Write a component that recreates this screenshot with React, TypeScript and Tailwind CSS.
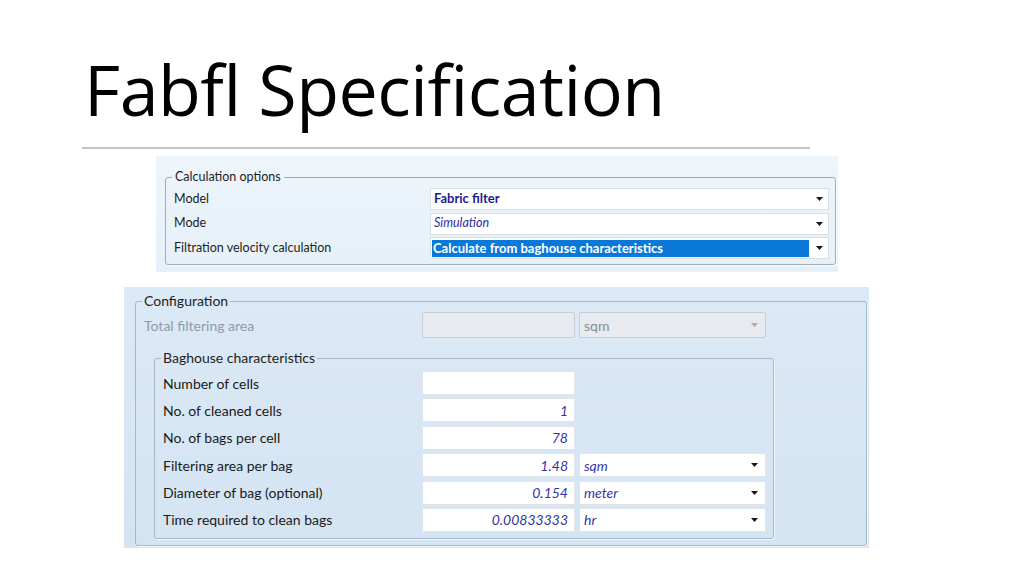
import React from 'react';

const Arrow: React.FC<{ grey?: boolean }> = ({ grey }) => (
  <svg width="7" height="4" viewBox="0 0 7 4" className={grey ? 'fill-[#a9adb2]' : 'fill-[#1a1a1a]'}>
    <path d="M0 0h7L3.5 4z" />
  </svg>
);

const calcRows = [
  { label: 'Model', value: 'Fabric filter', kind: 'bold' },
  { label: 'Mode', value: 'Simulation', kind: 'italic' },
  { label: 'Filtration velocity calculation', value: 'Calculate from baghouse characteristics', kind: 'selected' },
];

const bagRows: { label: string; value: string; unit?: string }[] = [
  { label: 'Number of cells', value: '' },
  { label: 'No. of cleaned cells', value: '1' },
  { label: 'No. of bags per cell', value: '78' },
  { label: 'Filtering area per bag', value: '1.48', unit: 'sqm' },
  { label: 'Diameter of bag (optional)', value: '0.154', unit: 'meter' },
  { label: 'Time required to clean bags', value: '0.00833333', unit: 'hr' },
];

const App: React.FC = () => {
  return (
    <div className="w-[1024px] h-[576px] bg-white overflow-hidden font-['Lato','Noto_Sans',sans-serif]">
      {/* Slide title */}
      <h1 className="ml-[84px] pt-[54px] text-[70px] leading-none text-black font-['Open_Sans',sans-serif] tracking-[-0.5px]">
        Fabfl Specification
      </h1>
      <div className="ml-[82px] mt-[23px] w-[728px] h-[2px] bg-[#c4c4c4]" />

      {/* Calculation options panel */}
      <div className="ml-[156px] mt-[7px] w-[682px] h-[116px] bg-gradient-to-b from-[#eef5fb] to-[#e6f0f8] pt-[13px] pl-[9px] pr-[4px]">
        <fieldset className="w-[669px] border border-[#a2acb6] rounded-[3px] px-[6px] pb-[5px] shadow-[1px_1px_0_#fbfdff]">
          <legend className="px-[3px] text-[12.5px] leading-[16px] text-[#1e1e1e]">Calculation options</legend>
          <div className="flex flex-col gap-[2.5px] pt-[3px]">
            {calcRows.map((r) => (
              <div key={r.label} className="flex items-center h-[22px]">
                <div className="w-[258px] pl-[2px] text-[12.5px] text-[#1e1e1e]">{r.label}</div>
                <div className="w-[399px] h-[22px] bg-white border border-[#dadfe4] flex items-center pl-[1px] pr-[5px]">
                  {r.kind === 'selected' ? (
                    <div className="flex-1 h-[17px] bg-[#0a78d7] text-white font-bold text-[13px] leading-[17px] pl-[1px]">
                      {r.value}
                    </div>
                  ) : (
                    <div
                      className={
                        r.kind === 'bold'
                          ? 'flex-1 pl-[2px] text-[13px] font-bold text-[#1d1d8f]'
                          : 'flex-1 pl-[2px] text-[12.5px] italic text-[#2d2d9c]'
                      }
                    >
                      {r.value}
                    </div>
                  )}
                  <div className="w-[14px] flex justify-end">
                    <Arrow />
                  </div>
                </div>
              </div>
            ))}
          </div>
        </fieldset>
      </div>

      {/* Configuration panel */}
      <div className="ml-[124px] mt-[15px] w-[745px] h-[261px] bg-gradient-to-b from-[#dce9f6] to-[#d4e4f3] pt-[5px] pl-[11px] pr-[2px]">
        <fieldset className="w-[732px] border border-[#a6b8ca] rounded-[3px] px-[6px] pb-[6px] shadow-[1px_1px_0_#f3f8fd]">
          <legend className="px-[2px] text-[14px] leading-[18px] text-[#1e1e1e]">Configuration</legend>
          <div className="flex items-center h-[26px] mt-[2px]">
            <div className="w-[280px] pl-[2px] text-[14px] text-[#8e9ba7]">Total filtering area</div>
            <div className="w-[153px] h-[26px] bg-[#e7eaee] border border-[#c9ced4] rounded-[2px]" />
            <div className="ml-[4px] w-[187px] h-[26px] bg-[#e7eaee] border border-[#c9ced4] rounded-[2px] flex items-center pl-[4px] pr-[7px]">
              <span className="flex-1 text-[14px] text-[#8a8d90]">sqm</span>
              <Arrow grey />
            </div>
          </div>

          <fieldset className="ml-[12px] mt-[11px] w-[620px] border border-[#a6b8ca] rounded-[3px] px-[6px] pb-[6px] shadow-[1px_1px_0_#f3f8fd]">
            <legend className="px-[2px] text-[14px] leading-[18px] text-[#1e1e1e]">Baghouse characteristics</legend>
            <div className="flex flex-col gap-[3.4px] pt-[4px]">
              {bagRows.map((r) => (
                <div key={r.label} className="flex items-center h-[24px]">
                  <div className="w-[261px] pl-[2px] text-[14px] text-[#1a1a1a]">{r.label}</div>
                  <div className="w-[153px] h-[24px] bg-white border border-[#e0e5ea] flex items-center justify-end pr-[6px] text-[14px] italic text-[#3434a6]">
                    {r.value}
                  </div>
                  {r.unit && (
                    <div className="ml-[4px] w-[187px] h-[24px] bg-white border border-[#e0e5ea] flex items-center pl-[4px] pr-[7px]">
                      <span className="flex-1 text-[14px] italic text-[#3434a6]">{r.unit}</span>
                      <Arrow />
                    </div>
                  )}
                </div>
              ))}
            </div>
          </fieldset>
        </fieldset>
      </div>
    </div>
  );
};

export default App;
